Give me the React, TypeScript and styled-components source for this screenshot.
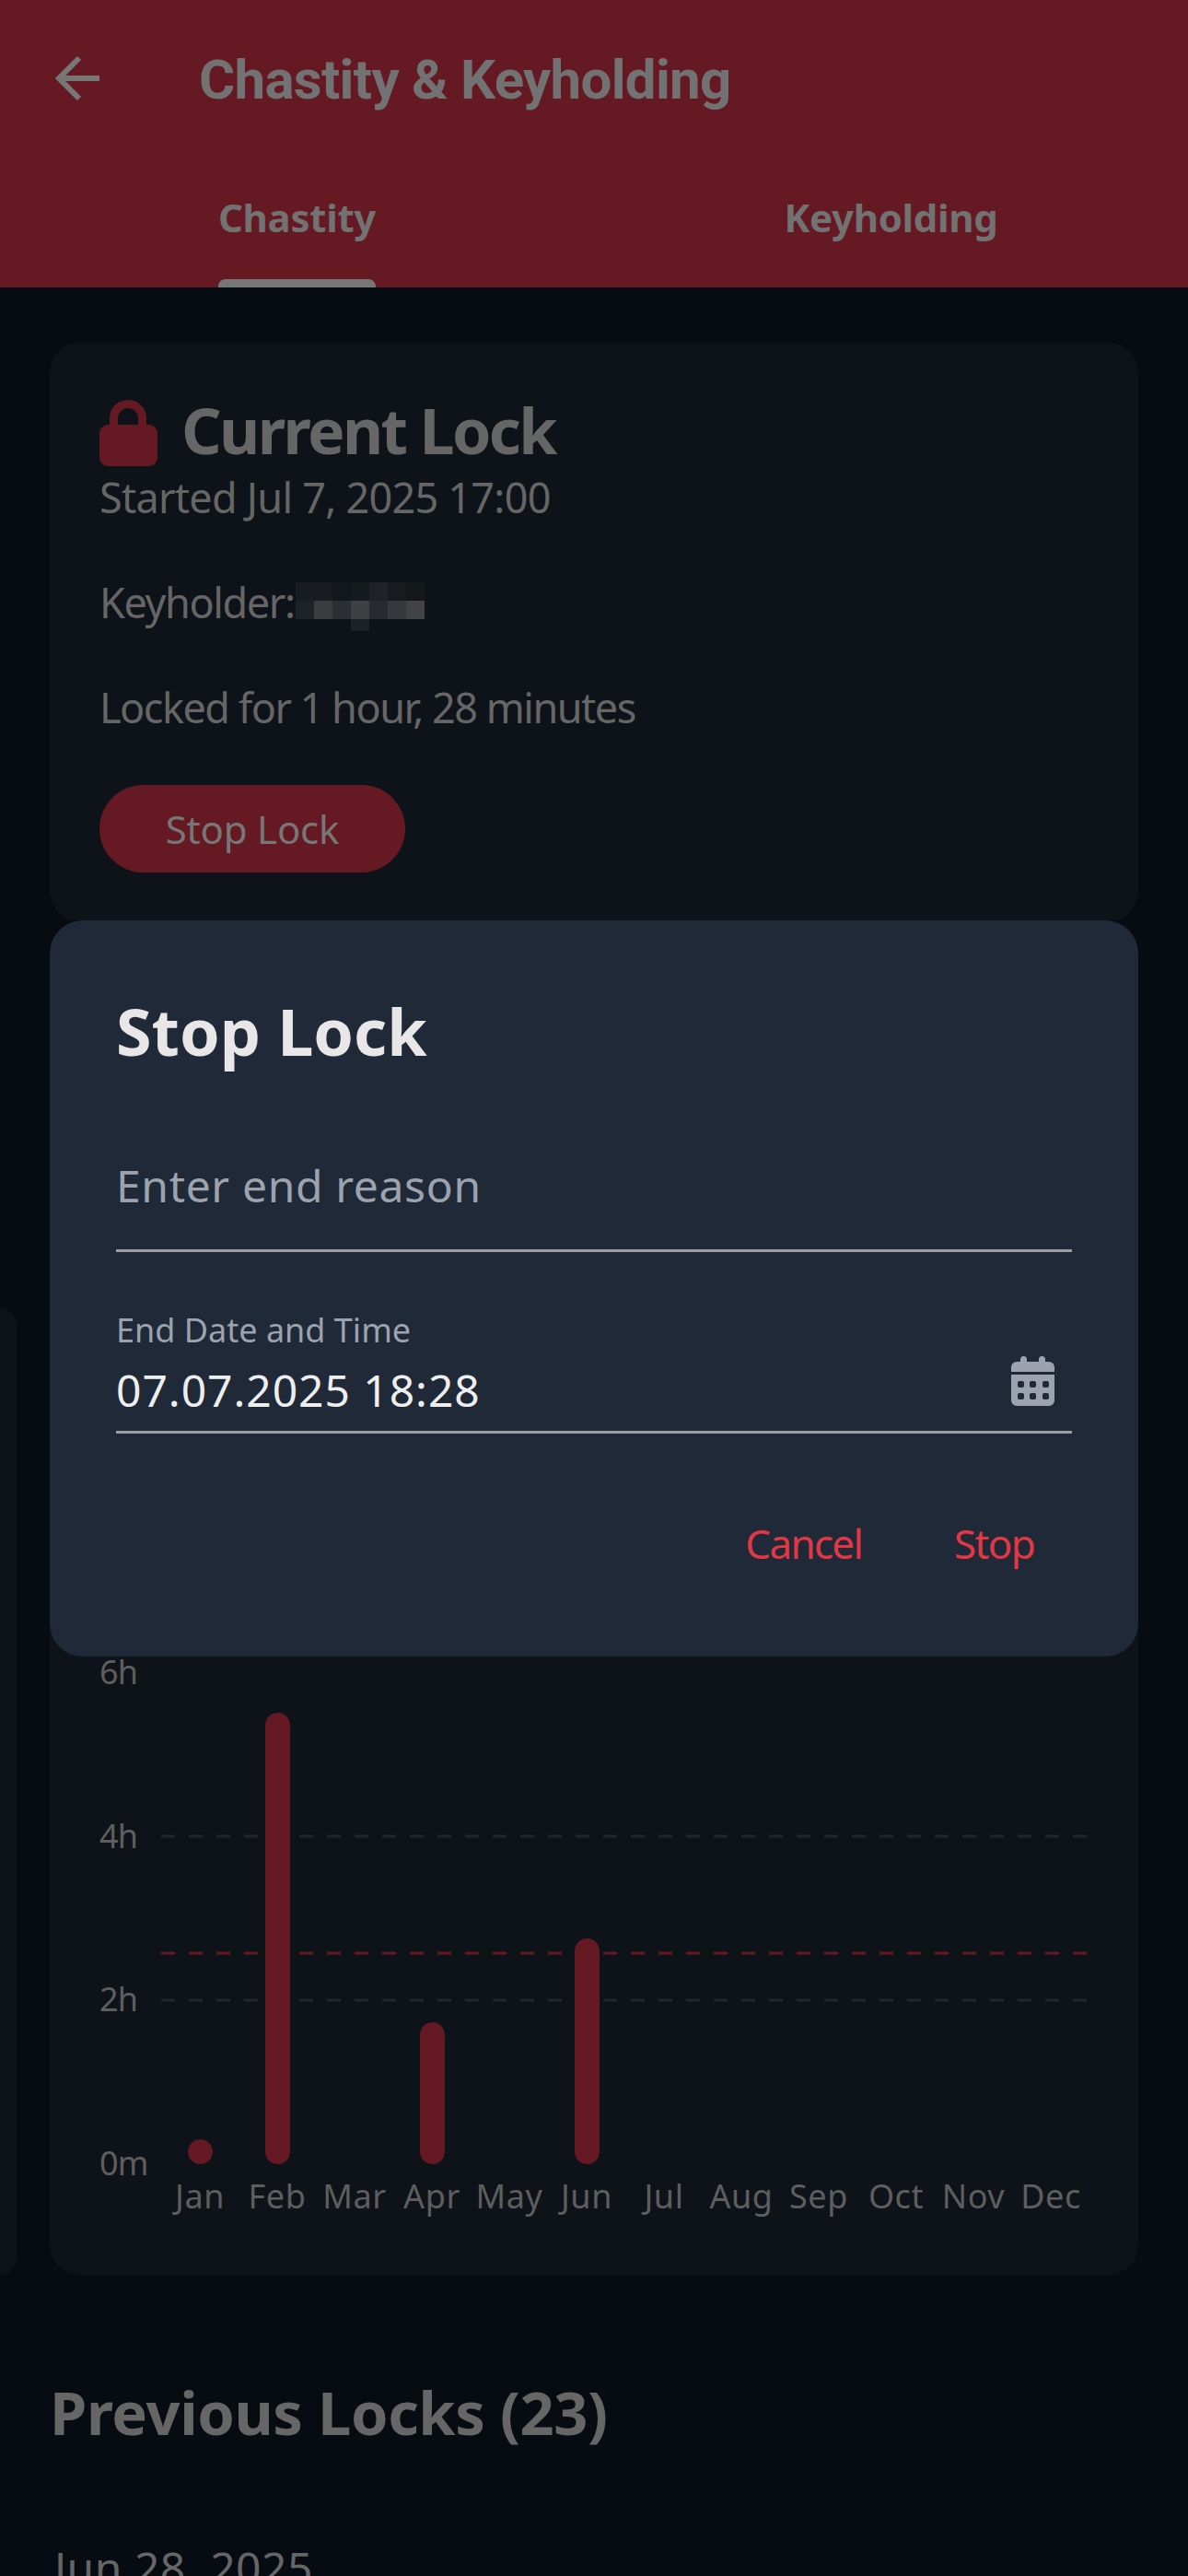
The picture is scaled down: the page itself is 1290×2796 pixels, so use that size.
import styled, { createGlobalStyle } from 'styled-components';

const GlobalStyle = createGlobalStyle`
  html, body {
    margin: 0;
    background: #070b12;
  }
  * {
    box-sizing: border-box;
  }
`;

const Screen = styled.div`
  position: relative;
  width: 1290px;
  height: 2796px;
  overflow: hidden;
  background: #070b12;
  font-family: 'Noto Sans', sans-serif;
  color: #666;
`;

const Header = styled.header`
  height: 312px;
  background: #641923;
  display: flex;
  flex-direction: column;
  justify-content: space-between;
`;

const Toolbar = styled.div`
  height: 170px;
  display: flex;
  align-items: center;
  padding-left: 57px;
`;

const BackIcon = styled.svg`
  width: 54px;
  height: 54px;
  flex: none;
  margin-right: 105px;
`;

const Title = styled.h1`
  margin: 4px 0 0;
  font-family: Roboto, sans-serif;
  font-size: 60px;
  line-height: 70px;
  font-weight: 700;
  letter-spacing: -0.7px;
  color: #727272;
`;

const Tabs = styled.nav`
  display: flex;
`;

const Tab = styled.div`
  flex: 1;
  display: flex;
  justify-content: center;
`;

const TabInner = styled.div`
  display: flex;
  flex-direction: column;
`;

const TabLabel = styled.span`
  font-size: 42px;
  line-height: 48px;
  font-weight: 700;
  letter-spacing: -0.3px;
  color: #727272;
  margin-bottom: 43px;
`;

const Indicator = styled.span<{ $active: boolean }>`
  height: 9px;
  border-radius: 8px 8px 0 0;
  background: ${(p) => (p.$active ? '#777' : 'transparent')};
`;

const Main = styled.main`
  padding: 60px 54px 0;
`;

const Card = styled.section`
  background: #0e1319;
  border-radius: 32px;
`;

const LockCard = styled(Card)`
  padding: 55px 54px 53px;
`;

const LockHeading = styled.div`
  display: flex;
  align-items: flex-start;
`;

const LockIcon = styled.svg`
  width: 64px;
  height: 72px;
  flex: none;
  margin: 7px 25px 0 0;
`;

const CardTitle = styled.h2`
  margin: 0;
  font-size: 68px;
  line-height: 80px;
  font-weight: 700;
  letter-spacing: -2.6px;
  color: #666;
`;

const InfoList = styled.div`
  display: flex;
  flex-direction: column;
  gap: 60px;
  margin-top: 6px;
`;

const InfoLine = styled.div<{ $spacing: number }>`
  display: flex;
  font-size: 45px;
  line-height: 54px;
  letter-spacing: ${(p) => p.$spacing}px;
  color: #666;
`;

const Pixelated = styled.div`
  display: grid;
  grid-template-columns: repeat(7, 20px);
  grid-template-rows: 20px 20px 13px;
  height: 53px;
  margin: 5px 0 -4px 1px;
`;

const Pixel = styled.span<{ $shade: string }>`
  background: ${(p) => p.$shade};
`;

const StopButton = styled.div`
  width: 332px;
  height: 95px;
  margin-top: 57px;
  border-radius: 48px;
  background: #641923;
  color: #777;
  font-size: 42px;
  letter-spacing: -0.2px;
  display: flex;
  align-items: center;
  justify-content: center;
`;

const Carousel = styled.div`
  display: flex;
  gap: 36px;
  margin: 420px 0 0 -54px;
`;

const PeekCard = styled(Card)`
  width: 18px;
  flex: none;
  border-radius: 0 32px 32px 0;
`;

const ChartCard = styled(Card)`
  flex: 1;
  padding: 374px 0 64px 54px;
  display: flex;
`;

const YAxis = styled.div`
  width: 67px;
  height: 575px;
  flex: none;
  display: flex;
  flex-direction: column;
  justify-content: space-between;
`;

const AxisLabel = styled.span`
  font-size: 36px;
  line-height: 42px;
  letter-spacing: -0.8px;
  color: #5e5e5e;
`;

const Plot = styled.div`
  margin-top: 16px;
  width: 1008px;
`;

const PlotSvg = styled.svg`
  display: block;
  width: 1008px;
  height: 539px;
`;

const Months = styled.div`
  display: grid;
  grid-template-columns: repeat(12, 84px);
  margin-top: 14px;
`;

const Month = styled.span`
  font-size: 36px;
  line-height: 42px;
  letter-spacing: 0.6px;
  text-align: center;
  color: #5e5e5e;
`;

const SectionTitle = styled.h2`
  margin: 110px 0 0;
  font-size: 65px;
  line-height: 78px;
  font-weight: 700;
  letter-spacing: -0.4px;
  color: #666;
`;

const HistoryDate = styled.div`
  margin: 103px 0 0 5px;
  font-size: 48px;
  line-height: 54px;
  letter-spacing: 0.5px;
  color: #666;
`;

const Dialog = styled.div`
  position: absolute;
  top: 999px;
  left: 54px;
  width: 1182px;
  padding: 80px 72px 97px;
  background: #1f2937;
  border-radius: 36px;
`;

const DialogTitle = styled.h2`
  margin: 0;
  font-size: 70px;
  line-height: 80px;
  font-weight: 700;
  color: #e8e6e6;
`;

const Field = styled.div<{ $top: number; $bottom: number }>`
  display: flex;
  justify-content: space-between;
  align-items: flex-end;
  margin-top: ${(p) => p.$top}px;
  padding-bottom: ${(p) => p.$bottom}px;
  border-bottom: 3px solid #9a9ca1;
`;

const FieldText = styled.div<{ $muted?: boolean }>`
  font-size: 48px;
  line-height: 56px;
  letter-spacing: ${(p) => (p.$muted ? 0.65 : 0.95)}px;
  color: ${(p) => (p.$muted ? '#9ca3af' : '#eeeeee')};
`;

const FieldLabel = styled.div`
  font-size: 36px;
  line-height: 42px;
  padding-bottom: 1px;
  margin-bottom: 15px;
  color: #9ca3af;
`;

const CalendarIcon = styled.svg`
  width: 47px;
  height: 54px;
  flex: none;
  margin: 0 19px 11px 0;
`;

const Actions = styled.div`
  display: flex;
  justify-content: flex-end;
  gap: 100px;
  margin-top: 93px;
  padding-right: 41px;
`;

const ActionText = styled.span`
  font-size: 44px;
  line-height: 52px;
  letter-spacing: -1.7px;
  color: #e23744;
`;

const pixelRows = [
  ['#181b22', '#181b22', '#14171d', '#151a1e', '#1f2329', '#171b1f', '#14181b'],
  ['#1f2329', '#3a3c40', '#2b2e33', '#3f4044', '#272a2f', '#36383c', '#434346'],
  ['#0e1319', '#0e1319', '#0e1319', '#1e2028', '#0e1319', '#0e1319', '#0e1319'],
];

const months = ['Jan', 'Feb', 'Mar', 'Apr', 'May', 'Jun', 'Jul', 'Aug', 'Sep', 'Oct', 'Nov', 'Dec'];

const bars = [
  { x: 29, top: 512 },
  { x: 113, top: 49 },
  { x: 281, top: 385 },
  { x: 449, top: 294 },
];

const App = () => {
  return (
    <Screen>
      <GlobalStyle />
      <Header>
        <Toolbar>
          <BackIcon viewBox="0 0 54 54">
            <path d="M51 27H7M29 5L7 27l22 22" fill="none" stroke="#777" strokeWidth="6" />
          </BackIcon>
          <Title>Chastity &amp; Keyholding</Title>
        </Toolbar>
        <Tabs>
          <Tab>
            <TabInner>
              <TabLabel>Chastity</TabLabel>
              <Indicator $active />
            </TabInner>
          </Tab>
          <Tab>
            <TabInner>
              <TabLabel>Keyholding</TabLabel>
              <Indicator $active={false} />
            </TabInner>
          </Tab>
        </Tabs>
      </Header>
      <Main>
        <LockCard>
          <LockHeading>
            <LockIcon viewBox="0 0 64 72">
              <path
                d="M11 27V20a20 20 0 0 1 40 0v7h-9v-7a11 11 0 0 0-22 0v7zM9 27h45a9 9 0 0 1 9 9v27a9 9 0 0 1-9 9H9a9 9 0 0 1-9-9V36a9 9 0 0 1 9-9z"
                fill="#641923"
              />
            </LockIcon>
            <CardTitle>Current Lock</CardTitle>
          </LockHeading>
          <InfoList>
            <InfoLine $spacing={-0.75}>Started Jul 7, 2025 17:00</InfoLine>
            <InfoLine $spacing={-1.4}>
              Keyholder:
              <Pixelated>
                {pixelRows.flat().map((shade, i) => (
                  <Pixel key={i} $shade={shade} />
                ))}
              </Pixelated>
            </InfoLine>
            <InfoLine $spacing={-1.5}>Locked for 1 hour, 28 minutes</InfoLine>
          </InfoList>
          <StopButton>Stop Lock</StopButton>
        </LockCard>
        <Carousel>
          <PeekCard />
          <ChartCard>
            <YAxis>
              <AxisLabel>6h</AxisLabel>
              <AxisLabel>4h</AxisLabel>
              <AxisLabel>2h</AxisLabel>
              <AxisLabel>0m</AxisLabel>
            </YAxis>
            <Plot>
              <PlotSvg viewBox="0 0 1008 539">
                <path d="M0 183H1006M0 361H1006" stroke="#23272b" strokeWidth="3" strokeDasharray="15 15" />
                <path d="M0 310H1006" stroke="#641923" strokeWidth="3" strokeDasharray="15 15" />
                {bars.map((b) => (
                  <rect key={b.x} x={b.x} y={b.top} width="27" height={539 - b.top} rx="13.5" fill="#641923" />
                ))}
              </PlotSvg>
              <Months>
                {months.map((m) => (
                  <Month key={m}>{m}</Month>
                ))}
              </Months>
            </Plot>
          </ChartCard>
        </Carousel>
        <SectionTitle>Previous Locks (23)</SectionTitle>
        <HistoryDate>Jun 28, 2025</HistoryDate>
      </Main>
      <Dialog>
        <DialogTitle>Stop Lock</DialogTitle>
        <Field $top={100} $bottom={41}>
          <FieldText $muted>Enter end reason</FieldText>
        </Field>
        <Field $top={64} $bottom={16}>
          <div>
            <FieldLabel>End Date and Time</FieldLabel>
            <FieldText>07.07.2025 18:28</FieldText>
          </div>
          <CalendarIcon viewBox="0 0 47 54">
            <path
              d="M10 6V3.5a3.5 3.5 0 0 1 7 0V6h13V3.5a3.5 3.5 0 0 1 7 0V6h4a6 6 0 0 1 6 6v5H0v-5a6 6 0 0 1 6-6zM0 20h47v28a6 6 0 0 1-6 6H6a6 6 0 0 1-6-6z"
              fill="#9ca3af"
            />
            <g fill="#1f2937">
              <rect x="7" y="27" width="7" height="7" rx="2" />
              <rect x="20" y="27" width="7" height="7" rx="2" />
              <rect x="34" y="27" width="7" height="7" rx="2" />
              <rect x="7" y="40" width="7" height="7" rx="2" />
              <rect x="20" y="40" width="7" height="7" rx="2" />
              <rect x="34" y="40" width="7" height="7" rx="2" />
            </g>
          </CalendarIcon>
        </Field>
        <Actions>
          <ActionText>Cancel</ActionText>
          <ActionText>Stop</ActionText>
        </Actions>
      </Dialog>
    </Screen>
  );
};

export default App;
